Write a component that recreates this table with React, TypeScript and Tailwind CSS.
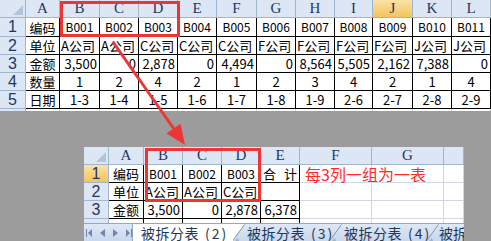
import React from 'react';

const cjk = "font-['Noto_Sans_CJK_SC','Noto_Sans',sans-serif]";

const topCols = ['A', 'B', 'C', 'D', 'E', 'F', 'G', 'H', 'I', 'J', 'K', 'L'];

const topRows: string[][] = [
  ['编码', 'B001', 'B002', 'B003', 'B004', 'B005', 'B006', 'B007', 'B008', 'B009', 'B010', 'B011'],
  ['单位', 'A公司', 'A公司', 'C公司', 'C公司', 'C公司', 'F公司', 'F公司', 'F公司', 'F公司', 'J公司', 'J公司'],
  ['金额', '3,500', '0', '2,878', '0', '4,494', '0', '8,564', '5,505', '2,162', '7,388', '0'],
  ['数量', '1', '2', '4', '2', '1', '2', '3', '4', '2', '1', '4'],
  ['日期', '1-3', '1-4', '1-5', '1-6', '1-7', '1-8', '1-9', '2-6', '2-7', '2-8', '2-9'],
];

const Corner = () => (
  <div className="bg-[#dce6f4] border-r border-b border-[#9eb6ce] flex items-end justify-end p-[2px]">
    <svg width="10" height="10" viewBox="0 0 10 10">
      <polygon points="10,0 10,10 0,10" fill="#b4c4d8" />
    </svg>
  </div>
);

const ColHead = ({ label, active }: { label: string; active?: boolean }) => (
  <div
    className={`border-r border-b border-[#9eb6ce] flex items-center justify-center text-[15px] leading-none text-[#1f3864] font-['Liberation_Serif',serif] ${
      active ? 'bg-gradient-to-b from-[#fbe2a4] to-[#f4c458]' : 'bg-[#dce6f4]'
    }`}
  >
    {label}
  </div>
);

const RowHead = ({ label, active }: { label: string; active?: boolean }) => (
  <div
    className={`border-r border-b border-[#9eb6ce] flex items-center justify-center overflow-hidden text-[16px] leading-none text-[#1f3864] font-['Liberation_Sans',sans-serif] ${
      active ? 'bg-gradient-to-b from-[#fbe2a4] to-[#f4c458]' : 'bg-[#dce6f4]'
    }`}
  >
    {label}
  </div>
);

const alignFor = (row: number, col: number) => {
  if (col === 0) return 'justify-center';
  if (row === 2) return 'justify-end pr-[2px]';
  if (row === 1) return 'justify-start pl-[1px]';
  return 'justify-center';
};

const TopSheet = () => (
  <div className="grid grid-cols-[26px_34px_40px_39px_39px_39px_40px_39px_39px_38px_40px_39px_39px] grid-rows-[18px_19px_18px_18px_18px_18px_2px] w-[491px] bg-white">
    <Corner />
    {topCols.map((c) => (
      <ColHead key={c} label={c} active={c === 'J'} />
    ))}
    {topRows.map((row, r) => (
      <React.Fragment key={r}>
        <RowHead label={String(r + 1)} />
        {row.map((v, c) => (
          <div
            key={c}
            className={`border-r border-b border-black flex items-center overflow-hidden whitespace-nowrap leading-none text-black ${cjk} ${
              r === 0 && c > 0 ? 'text-[12px]' : 'text-[13px]'
            } ${alignFor(r, c)}`}
          >
            {v}
          </div>
        ))}
      </React.Fragment>
    ))}
    <div className="bg-[#dce6f4] border-r border-[#9eb6ce]" />
    {topCols.map((c) => (
      <div key={c} className="border-r border-[#d0d7e5]" />
    ))}
  </div>
);

const bottomRows: string[][] = [
  ['编码', 'B001', 'B002', 'B003'],
  ['单位', 'A公司', 'A公司', 'C公司', ''],
  ['金额', '3,500', '0', '2,878', '6,378'],
  ['数量', '1', '2', '4', '7'],
];

const Cell = ({ v, r, c }: { v: string; r: number; c: number }) => (
  <div
    className={`border-r border-b border-black flex items-center overflow-hidden whitespace-nowrap leading-none text-black ${cjk} ${
      r === 0 && c > 0 ? 'text-[12px]' : 'text-[13px]'
    } ${alignFor(r, c)}`}
  >
    {v}
  </div>
);

const Blank = () => <div className="border-r border-b border-[#d0d7e5]" />;

const NavArrows = () => (
  <div className="w-[53px] h-full flex items-center gap-[8px] pl-[2px] border-r border-[#8ea9cc]">
    <svg width="6" height="8" viewBox="0 0 6 8">
      <rect x="0" y="0" width="1" height="8" fill="#6e88aa" />
      <polygon points="6,0 6,8 2,4" fill="#6e88aa" />
    </svg>
    <svg width="5" height="8" viewBox="0 0 5 8">
      <polygon points="5,0 5,8 0,4" fill="#6e88aa" />
    </svg>
    <svg width="5" height="8" viewBox="0 0 5 8">
      <polygon points="0,0 0,8 5,4" fill="#6e88aa" />
    </svg>
    <svg width="6" height="8" viewBox="0 0 6 8">
      <polygon points="0,0 0,8 4,4" fill="#6e88aa" />
      <rect x="5" y="0" width="1" height="8" fill="#6e88aa" />
    </svg>
  </div>
);

const Slant = ({ afterActive }: { afterActive?: boolean }) => (
  <svg width="12" height="17" viewBox="0 0 12 17" className="shrink-0">
    {afterActive && <polygon points="0,0 11,0 0,16" fill="#ffffff" />}
    <line x1="0" y1="16.5" x2="11.5" y2="0.5" stroke="#7f97b8" strokeWidth="1" />
    <polygon points="2,17 6,17 5,14" fill="#9fb3cd" />
  </svg>
);

const Tab = ({ name, no, active }: { name: string; no: string; active?: boolean }) => (
  <div
    className={`h-[17px] shrink-0 flex items-center whitespace-nowrap text-[14px] leading-[16px] text-[#1e395b] ${cjk} ${
      active ? 'bg-white w-[100px] pl-[8px]' : 'w-[85px] pl-[2px]'
    }`}
  >
    <span className="tracking-[0.5px]">{name}</span>
    <span className="ml-[6px] tracking-[2px]">({no})</span>
  </div>
);

const BottomSheet = () => (
  <div className="w-[380px] flex flex-col bg-white">
    <div className="grid grid-cols-[25px_35px_39px_39px_39px_39px_72px_72px_20px] grid-rows-[18px_18px_18px_18px_4px] bg-white">
      <Corner />
      {['A', 'B', 'C', 'D', 'E', 'F', 'G', ''].map((c, i) => (
        <ColHead key={i} label={c} />
      ))}

      <RowHead label="1" active />
      {bottomRows[0].map((v, c) => (
        <Cell key={c} v={v} r={0} c={c} />
      ))}
      <div className={`border-r border-b border-black flex items-center justify-between px-[2px] text-[13px] leading-none text-black ${cjk}`}>
        <span>合</span>
        <span>计</span>
      </div>
      <div className="border-r border-b border-[#d0d7e5] flex items-center pl-[5px] whitespace-nowrap">
        <span className={`text-[16px] leading-none text-[#ff2a2a] ${cjk}`}>每3列一组为一表</span>
      </div>
      <div className="border-r border-b border-[#d0d7e5]" />
      <Blank />

      <RowHead label="2" />
      {bottomRows[1].map((v, c) => (
        <Cell key={c} v={v} r={1} c={c} />
      ))}
      <Blank />
      <Blank />
      <Blank />

      <RowHead label="3" />
      {bottomRows[2].map((v, c) => (
        <Cell key={c} v={v} r={2} c={c} />
      ))}
      <Blank />
      <Blank />
      <Blank />

      <div className="bg-[#dce6f4] border-r border-[#9eb6ce]" />
      {bottomRows[3].map((v, c) => (
        <div key={c} className="border-r border-black" />
      ))}
      <div className="border-r border-[#d0d7e5]" />
      <div className="border-r border-[#d0d7e5]" />
      <div className="border-r border-[#d0d7e5]" />
    </div>
    <div className="h-[18px] flex items-start overflow-hidden border-t border-[#8ea9cc] bg-gradient-to-b from-[#dfe8f5] to-[#c9d8ec]">
      <NavArrows />
      <Tab name="被拆分表" no="2" active />
      <Slant afterActive />
      <Tab name="被拆分表" no="3" />
      <Slant />
      <Tab name="被拆分表" no="4" />
      <Slant />
      <div className={`h-[17px] flex items-center whitespace-nowrap text-[14px] leading-[16px] text-[#1e395b] ${cjk}`}>被拆</div>
    </div>
  </div>
);

export default function App() {
  return (
    <div className="relative w-[491px] h-[241px] overflow-hidden bg-[#9c9c9c]">
      <TopSheet />
      <div className="pl-[84px] pt-[36px]">
        <BottomSheet />
      </div>

      {/* red frames over the first three columns */}
      <div className="absolute left-[60px] top-[1px] w-[120px] h-[36px] border-[3px] border-[#ee3535] pointer-events-none" />
      <div className="absolute left-[145px] top-[148px] w-[116px] h-[54px] border-[3px] border-[#ee3535] pointer-events-none" />

      {/* arrow */}
      <svg className="absolute left-0 top-0 pointer-events-none" width="491" height="241" viewBox="0 0 491 241">
        <line x1="113" y1="42" x2="174" y2="129" stroke="#ee3535" strokeWidth="3" />
        <polygon points="185,145 166.5,133.5 180.5,123.7" fill="#ee3535" />
      </svg>
    </div>
  );
}
